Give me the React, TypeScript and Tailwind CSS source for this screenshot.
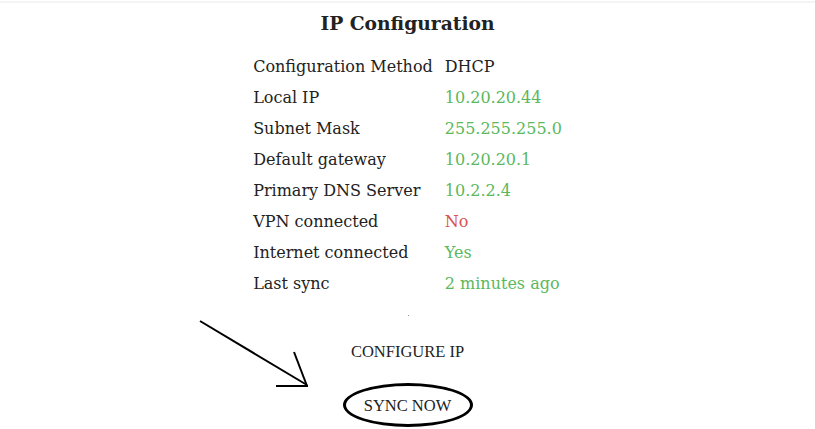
import React from "react";

const rows: { label: string; value: string; tone: "plain" | "ok" | "bad" }[] = [
  { label: "Configuration Method", value: "DHCP", tone: "plain" },
  { label: "Local IP", value: "10.20.20.44", tone: "ok" },
  { label: "Subnet Mask", value: "255.255.255.0", tone: "ok" },
  { label: "Default gateway", value: "10.20.20.1", tone: "ok" },
  { label: "Primary DNS Server", value: "10.2.2.4", tone: "ok" },
  { label: "VPN connected", value: "No", tone: "bad" },
  { label: "Internet connected", value: "Yes", tone: "ok" },
  { label: "Last sync", value: "2 minutes ago", tone: "ok" },
];

const toneClass = {
  plain: "text-[#222222]",
  ok: "text-[#5cb85c]",
  bad: "text-[#d9534f]",
};

const App = () => {
  return (
    <div className="relative min-h-screen bg-white font-['DejaVu_Serif',serif] text-[#222222]">
      <div className="h-[3px] border-b-2 border-[#f4f4f4]" />
      <h1 className="mt-[8px] text-center font-['DejaVu_Serif',serif] text-[18.7px] font-bold leading-[24px]">
        IP Configuration
      </h1>

      <div className="mt-[16px] flex justify-center">
        <table className="border-collapse text-[16px]">
          <tbody>
            {rows.map((r) => (
              <tr key={r.label} className="h-[31px]">
                <td className="pr-[12px] whitespace-nowrap">{r.label}</td>
                <td className={`whitespace-nowrap ${toneClass[r.tone]}`}>{r.value}</td>
              </tr>
            ))}
          </tbody>
        </table>
      </div>

      <div className="flex flex-col items-center">
        <div className="mt-[16px] h-[1px] w-[1px] translate-x-[1px] bg-[#999999]" />
        <button className="mt-[26px] font-['Liberation_Serif',serif] text-[16.5px] leading-[19px] text-[#222222]">
          CONFIGURE IP
        </button>
        <button className="mt-[22px] h-[44px] w-[130px] rounded-[50%] border-[3px] border-black font-['Liberation_Serif',serif] text-[16.5px] leading-[19px] text-[#222222]">
          SYNC NOW
        </button>
      </div>

      <svg
        className="absolute left-[195px] top-[316px]"
        width="120"
        height="76"
        viewBox="195 316 120 76"
        fill="none"
        stroke="black"
        strokeWidth="2"
      >
        <line x1="200" y1="321" x2="307" y2="385" />
        <line x1="294" y1="352" x2="307" y2="386" />
        <line x1="276" y1="386" x2="308" y2="386" />
      </svg>
    </div>
  );
};

export default App;
